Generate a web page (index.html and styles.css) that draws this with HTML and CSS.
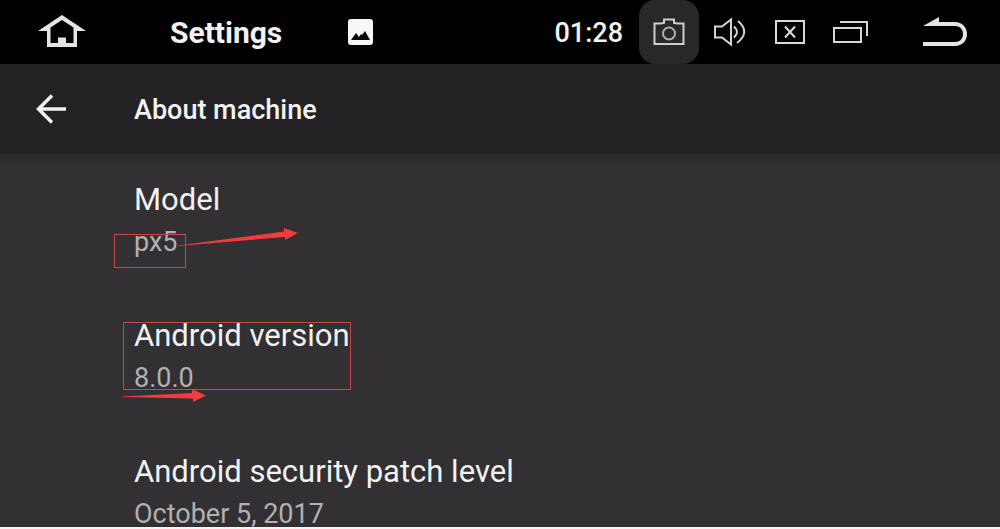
FILE: index.html
```
<!DOCTYPE html>
<html lang="en">
<head>
  <meta charset="UTF-8">
  <meta name="viewport" content="width=device-width, initial-scale=1">
  <title>Settings</title>
  <link rel="stylesheet" href="styles.css">
</head>
<body>
  <header class="status-bar">
    <button class="icon-button home" aria-label="Home">
      <svg width="48" height="34" viewBox="0 0 48 34">
        <path d="M24 0 L48 16 H39 V32 H9 V16 H0 Z M24 5 L12.500 12.500 V28 H20 V22.500 H28 V28 H35.500 V12.500 Z" fill="#e4e4e4" fill-rule="evenodd"/>
      </svg>
    </button>
    <div class="app-name">Settings</div>
    <svg class="picture" width="25" height="26" viewBox="0 0 25 26">
      <rect width="25" height="26" rx="3" fill="#f7f7f7"/>
      <path d="M3 21 L8 14 L11 18 L13 15 L14 16 L17 12 L22 21 Z" fill="#050505"/>
    </svg>
    <time class="clock">01:28</time>
    <button class="icon-button camera" aria-label="Screenshot">
      <svg width="32" height="28" viewBox="0 0 32 28" fill="none" stroke="#cfcdcf" stroke-width="2">
        <path d="M1.500 5.500 H7.500 L11 5 V1.500 H21 V5 L24 5.500 H30.500 V26 H1.500 Z"/>
        <circle cx="16" cy="15.500" r="6" stroke="#b0aeb0"/>
      </svg>
    </button>
    <button class="icon-button volume" aria-label="Volume">
      <svg width="34" height="30" viewBox="0 0 34 30" fill="none" stroke="#d4d4d4" stroke-width="2">
        <path d="M2 9.500 H9 L18 2.500 V27.500 L9 20.500 H2 Z"/>
        <path d="M21 9.500 Q27 15 21 20.500"/>
        <path d="M25 4 Q38 15 24 26"/>
      </svg>
    </button>
    <button class="icon-button close" aria-label="Close">
      <svg width="30" height="24" viewBox="0 0 30 24" fill="none" stroke="#dadada" stroke-width="2">
        <rect x="1" y="1" width="28" height="22"/>
        <path d="M10 6.500 L20 17.500 M20 6.500 L10 17.500"/>
      </svg>
    </button>
    <button class="icon-button recents" aria-label="Recent apps">
      <svg width="36" height="22" viewBox="0 0 36 22" fill="none" stroke="#d6d6d6" stroke-width="2">
        <rect x="1" y="7" width="27" height="14"/>
        <path d="M7 1 H34 V15"/>
      </svg>
    </button>
    <button class="icon-button return" aria-label="Back">
      <svg width="44" height="30" viewBox="0 0 44 30">
        <path d="M0 9 L16 0 V5 H32 C39 5 44 10 44 17 C44 24 39 29 32 29 H0 V25 H32 C37 25 40 21.500 40 17 C40 12.500 37 9 32 9 Z" fill="#e4e4e4"/>
      </svg>
    </button>
  </header>

  <div class="toolbar">
    <button class="icon-button" aria-label="Navigate up">
      <svg width="30" height="30" viewBox="0 0 30 30" fill="none" stroke="#f0f0f0" stroke-width="3.500">
        <path d="M30 15 H2.500 M16 1.500 L2.500 15 L16 28.500"/>
      </svg>
    </button>
    <h1 class="page-title">About machine</h1>
  </div>

  <main class="list">
    <section class="item">
      <h2 class="item-name">Model</h2>
      <p class="item-value">px5</p>
      <!-- callout: box and arrow -->
      <svg class="callout" width="300" height="136" viewBox="0 0 300 136">
        <rect x="114.500" y="70.500" width="71" height="33" fill="none" stroke="#c8484a"/>
        <path d="M178 81.500 L284 67.500 V64 L298 69 L285 76 V73 L178 82 Z" fill="#f23b3f"/>
      </svg>
    </section>
    <section class="item">
      <h2 class="item-name">Android version</h2>
      <p class="item-value">8.0.0</p>
      <svg class="callout" width="360" height="136" viewBox="0 0 360 136">
        <rect x="123.500" y="22.500" width="227" height="67" fill="none" stroke="#c8484a"/>
        <path d="M122 96.500 L192 93 V89 L206 95.500 L193 102 V98.500 L122 97 Z" fill="#f23b3f"/>
      </svg>
    </section>
    <section class="item">
      <h2 class="item-name">Android security patch level</h2>
      <p class="item-value">October 5, 2017</p>
    </section>
  </main>
</body>
</html>
```

FILE: styles.css
```
* {
  box-sizing: border-box;
}

body {
  margin: 0;
  height: 100vh;
  display: flex;
  flex-direction: column;
  background: #323032;
  border-bottom: 2px solid #f4f4f4;
  color: #f2f2f2;
  font-family: Roboto, sans-serif;
  overflow: hidden;
}

.icon-button {
  display: flex;
  align-items: center;
  justify-content: center;
  flex: none;
  padding: 0;
  border: none;
  background: none;
  cursor: pointer;
}

.status-bar {
  display: flex;
  align-items: center;
  flex: none;
  height: 64px;
  padding: 0 33px 0 38px;
  background: #000;
}

.app-name,
.clock,
.page-title {
  padding-top: 2px;
  line-height: 36px;
}

.app-name {
  margin-left: 84px;
  font-size: 30px;
  font-weight: 700;
}

.picture {
  margin-left: 66px;
}

.clock {
  margin-left: auto;
  font-size: 27px;
  font-weight: 500;
}

.camera {
  width: 60px;
  height: 64px;
  margin-left: 16px;
  border-radius: 16px;
  background: #29272a;
}

.volume {
  margin-left: 14px;
}

.close,
.recents {
  margin-left: 28px;
}

.return {
  margin-left: 54px;
}

.toolbar {
  display: flex;
  align-items: center;
  flex: none;
  height: 90px;
  padding-left: 36px;
  background: #232124;
}

.page-title {
  margin: 0 0 0 68px;
  font-size: 27px;
  font-weight: 500;
}

.list {
  flex: 1;
  min-height: 0;
  padding-top: 10px;
  background: linear-gradient(#2a282b, #323032 12px);
  overflow: hidden;
}

.item {
  position: relative;
  height: 136px;
  padding: 18px 0 0 134px;
}

.item-name {
  margin: 0;
  font-size: 31px;
  font-weight: 400;
  line-height: 36px;
}

.item-value {
  margin: 11px 0 0;
  color: #b2b0b2;
  font-size: 27px;
  line-height: 26px;
}

.callout {
  position: absolute;
  top: 0;
  left: 0;
}
```
